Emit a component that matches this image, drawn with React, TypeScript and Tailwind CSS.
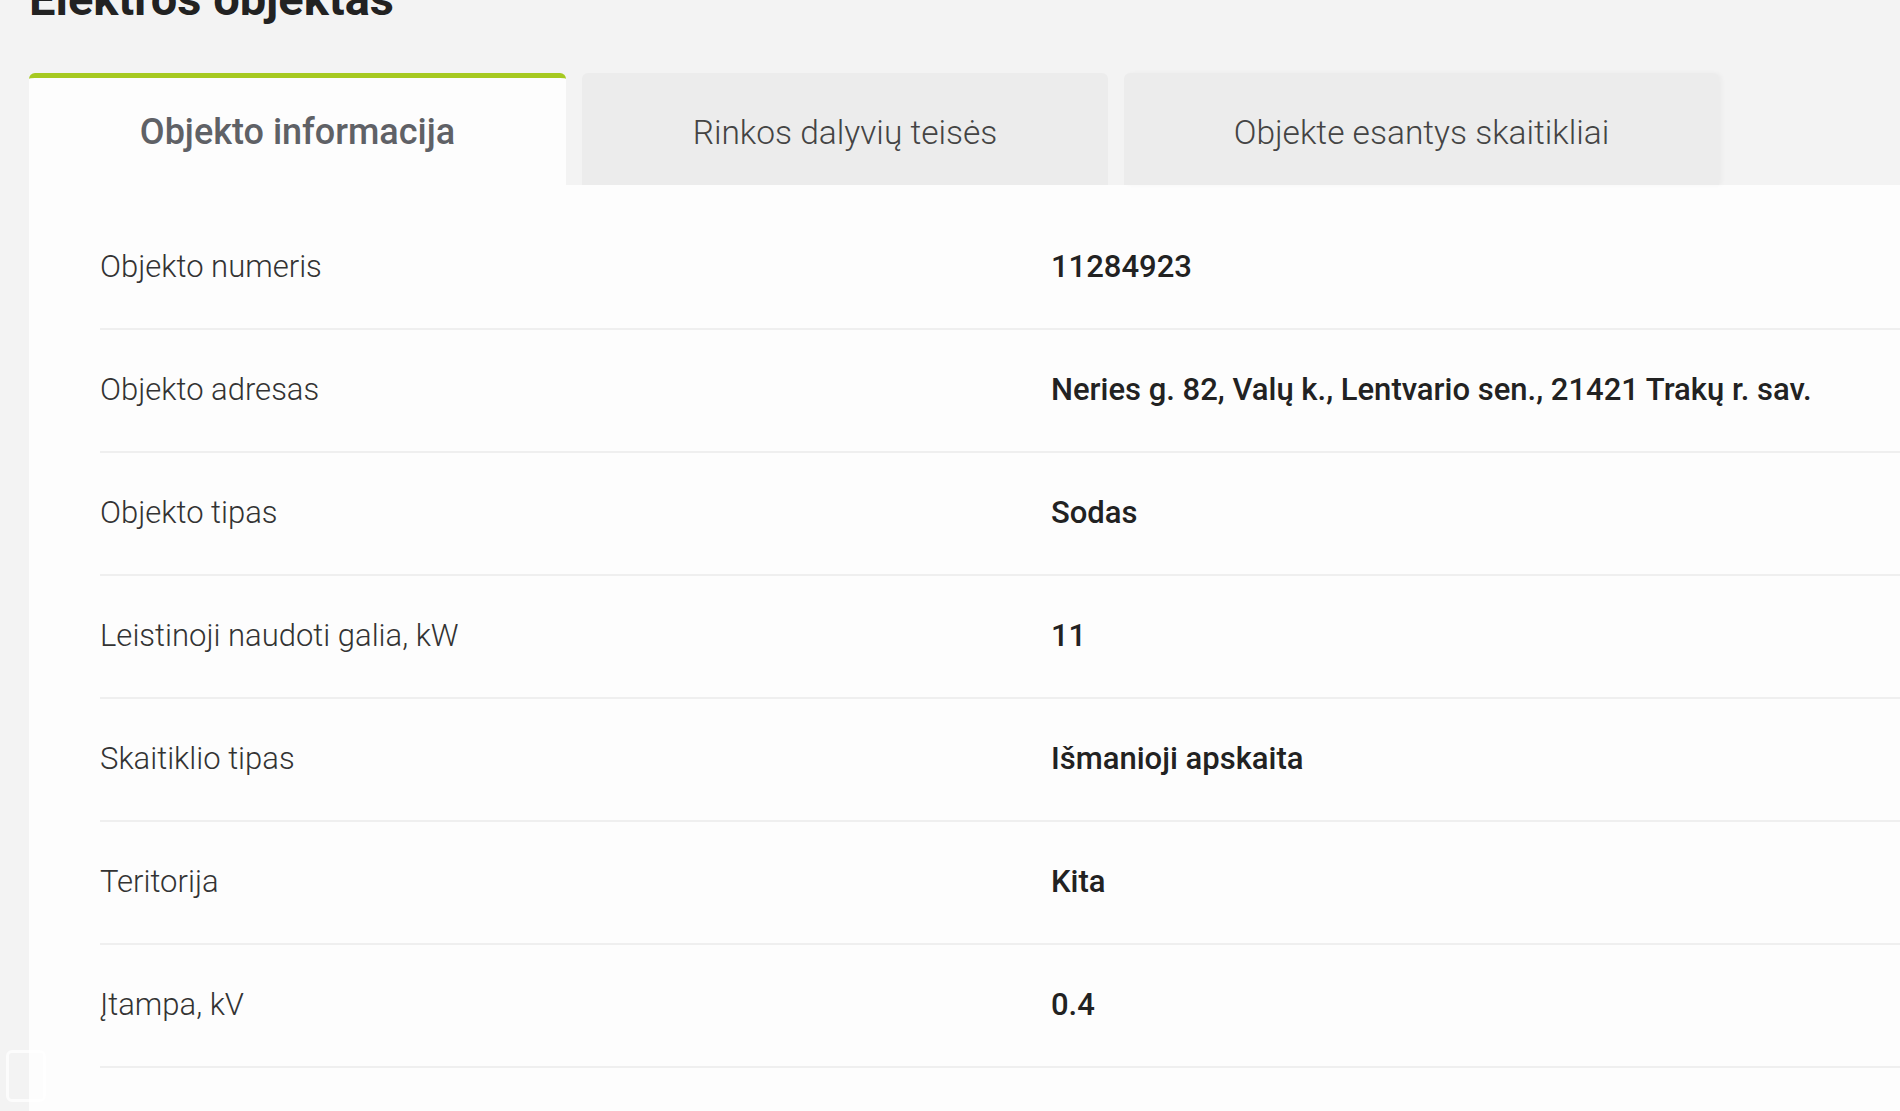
import React from 'react';

const ROWS: { label: string; value: string }[] = [
  { label: 'Objekto numeris', value: '11284923' },
  { label: 'Objekto adresas', value: 'Neries g. 82, Valų k., Lentvario sen., 21421 Trakų r. sav.' },
  { label: 'Objekto tipas', value: 'Sodas' },
  { label: 'Leistinoji naudoti galia, kW', value: '11' },
  { label: 'Skaitiklio tipas', value: 'Išmanioji apskaita' },
  { label: 'Teritorija', value: 'Kita' },
  { label: 'Įtampa, kV', value: '0.4' },
];

const TABS = ['Objekto informacija', 'Rinkos dalyvių teisės', 'Objekte esantys skaitikliai'];

const App: React.FC = () => {
  return (
    <div
      className="min-h-screen h-[1111px] overflow-hidden bg-[#f3f3f3] pl-[29px] relative"
      style={{ fontFamily: 'Roboto, "Noto Sans", sans-serif' }}
    >
      {/* Page title (scrolled partly out of view) */}
      <h1 className="mt-[-25px] text-[47px] leading-[47px] font-bold text-[#222]">Elektros objektas</h1>

      {/* Tabs */}
      <div className="mt-[51px] flex gap-[16px]">
        <div className="w-[537px] h-[112px] bg-[#fdfdfd] rounded-t-[6px] border-t-[5px] border-[#a6c920] flex items-center justify-center text-[36px] font-medium text-[#5f6166]">
          {TABS[0]}
        </div>
        <div className="w-[526px] h-[112px] pt-[9px] bg-[#ececec] rounded-t-[6px] flex items-center justify-center text-[33.5px] font-light text-[#444]">
          {TABS[1]}
        </div>
        <div className="w-[595px] h-[112px] pt-[9px] bg-[#ececec] rounded-t-[6px] shadow-[3px_0_4px_rgba(0,0,0,0.03)] flex items-center justify-center text-[33.5px] font-light text-[#444]">
          {TABS[2]}
        </div>
      </div>

      {/* Details card */}
      <div className="bg-[#fdfdfd] pl-[71px] pt-[22px] h-full">
        {ROWS.map((r) => (
          <div key={r.label} className="flex items-center h-[123px] border-b-2 border-[#efefef]">
            <div className="w-[951px] text-[31px] font-light text-[#333]">{r.label}</div>
            <div className="text-[31px] font-medium text-[#222]">{r.value}</div>
          </div>
        ))}
      </div>

      {/* faint watermark */}
      <div className="absolute left-[6px] top-[1050px] w-[40px] h-[52px] rounded-[6px] border-[3px] border-white/70" />
    </div>
  );
};

export default App;
